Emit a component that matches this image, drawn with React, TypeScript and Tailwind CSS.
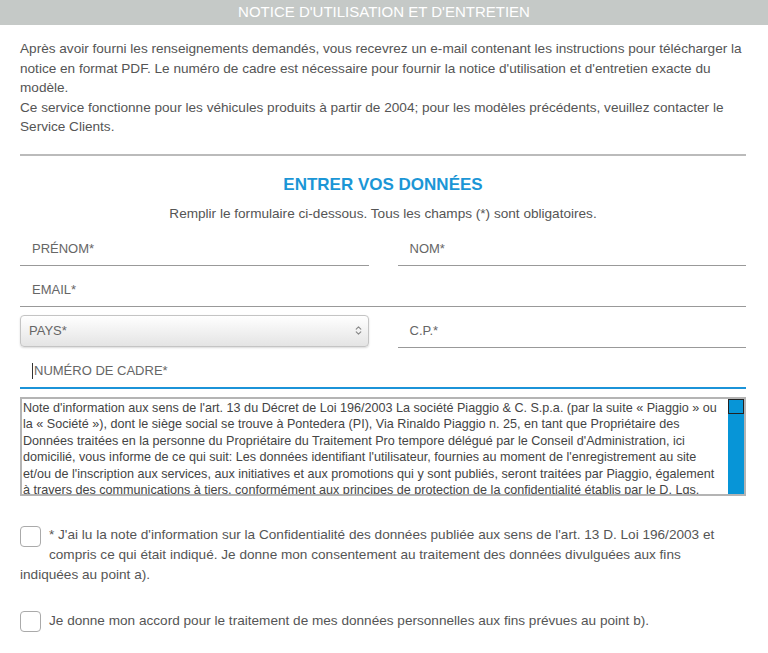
import { ChevronsUpDown } from 'lucide-react';

const privacy =
  "Note d'information aux sens de l'art. 13 du Décret de Loi 196/2003 La société Piaggio & C. S.p.a. (par la suite « Piaggio » ou la « Société »), dont le siège social se trouve à Pontedera (PI), Via Rinaldo Piaggio n. 25, en tant que Propriétaire des Données traitées en la personne du Propriétaire du Traitement Pro tempore délégué par le Conseil d'Administration, ici domicilié, vous informe de ce qui suit: Les données identifiant l'utilisateur, fournies au moment de l'enregistrement au site et/ou de l'inscription aux services, aux initiatives et aux promotions qui y sont publiés, seront traitées par Piaggio, également à travers des communications à tiers, conformément aux principes de protection de la confidentialité établis par le D. Lgs. 196/2003.";

function Field({ label, active }: { label: string; active?: boolean }) {
  return (
    <div
      className={
        'flex h-[33px] items-center px-3 text-[13px] uppercase text-[#666] ' +
        (active ? 'border-b-2 border-[#1b93d8]' : 'border-b border-[#999]')
      }
    >
      {active && <span className="mr-px h-[16px] w-px bg-[#333]" />}
      <span>{label}</span>
    </div>
  );
}

export default function App() {
  return (
    <div className="min-h-[653px] bg-white font-['Liberation_Sans',Arial,sans-serif] text-[#555]">
      {/* Header */}
      <div className="flex h-[25px] items-center justify-center bg-[#c5c9c7] text-[15px] text-white">
        NOTICE D'UTILISATION ET D'ENTRETIEN
      </div>

      <div className="pl-[20px] pr-[22px]">
        <p className="mt-[14px] text-[13.6px] leading-[19.5px]">
          Après avoir fourni les renseignements demandés, vous recevrez un e-mail contenant les instructions pour télécharger la notice en format PDF. Le numéro de cadre est nécessaire pour fournir la notice d'utilisation et d'entretien exacte du modèle.
          <br />
          Ce service fonctionne pour les véhicules produits à partir de 2004; pour les modèles précédents, veuillez contacter le Service Clients.
        </p>

        <div className="mt-[17px] h-[2px] bg-[#bbbbbb]" />

        <h2 className="mt-[19px] text-center text-[17px] font-bold leading-[20px] text-[#1b96d6]">
          ENTRER VOS DONNÉES
        </h2>
        <p className="mt-[9px] text-center text-[13.6px] leading-[19px]">
          Remplir le formulaire ci-dessous. Tous les champs (*) sont obligatoires.
        </p>

        <form className="mt-[10px] flex flex-col gap-[8px]">
          <div className="grid grid-cols-2 gap-[29px]">
            <Field label="Prénom*" />
            <Field label="Nom*" />
          </div>
          <Field label="Email*" />
          <div className="grid grid-cols-2 gap-[29px]">
            <div className="flex h-[32px] items-center justify-between rounded-[4px] border border-[#c4c4c4] bg-gradient-to-b from-white to-[#e4e4e4] pl-[8px] pr-[4px] text-[13px] text-[#666] shadow-[0_1px_2px_rgba(0,0,0,0.15)]">
              <span>PAYS*</span>
              <ChevronsUpDown size={11} strokeWidth={2.5} className="text-[#888]" />
            </div>
            <Field label="C.P.*" />
          </div>
          <Field label="Numéro de cadre*" active />

          <div className="flex h-[99px] overflow-hidden border-2 border-[#b4b4b4]">
            <div className="flex-1 overflow-hidden pt-[1px] pl-[1px] pr-[6px] text-[12.6px] leading-[16.5px] text-[#444]">
              {privacy}
            </div>
            <div className="flex w-[16px] shrink-0 flex-col bg-[#0795d7]">
              <div className="h-[15px] border-[1.5px] border-[#222]" />
            </div>
          </div>
        </form>

        <div className="mt-[29px] pr-[26px] text-[13.6px] leading-[20px]">
          <span className="float-left mr-[8px] mb-[4px] mt-px h-[21px] w-[21px] rounded-[4px] border border-[#aaa] bg-white" />
          * J'ai lu la note d'information sur la Confidentialité des données publiée aux sens de l'art. 13 D. Loi 196/2003 et compris ce qui était indiqué. Je donne mon consentement au traitement des données divulguées aux fins indiquées au point a).
        </div>

        <div className="mt-[26px] flex items-center gap-[8px] text-[13.6px] leading-[20px]">
          <span className="h-[21px] w-[21px] shrink-0 rounded-[4px] border border-[#aaa] bg-white" />
          <span>Je donne mon accord pour le traitement de mes données personnelles aux fins prévues au point b).</span>
        </div>
      </div>
    </div>
  );
}
